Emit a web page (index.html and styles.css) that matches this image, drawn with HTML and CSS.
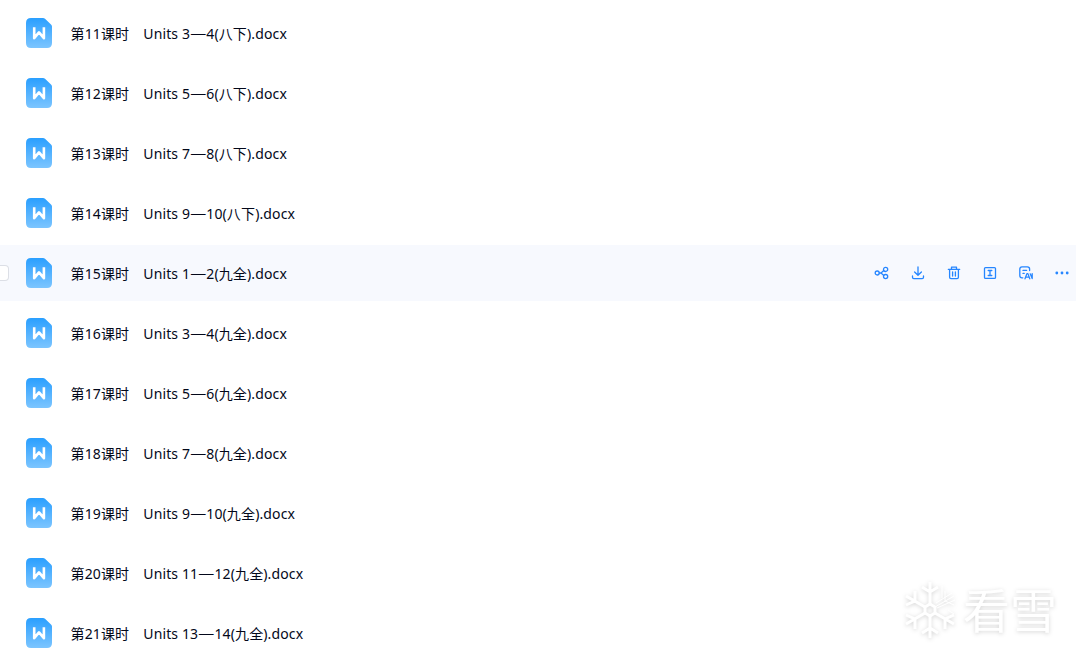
FILE: index.html
```html
<!DOCTYPE html>
<html lang="zh-CN">
<head>
    <meta charset="UTF-8">
    <meta name="viewport" content="width=device-width, initial-scale=1.0">
    <title>文件列表</title>
    <link rel="stylesheet" href="styles.css">
</head>
<body>
    <svg class="sprite" width="0" height="0">
        <defs>
            <linearGradient id="docBlue" x1="0" y1="0" x2="0" y2="1">
                <stop offset="0" stop-color="#2a9fff"/>
                <stop offset="1" stop-color="#7cc5ff"/>
            </linearGradient>
            <symbol id="doc" viewBox="0 0 26 30">
                <path d="M5 0H17Q18.1 0 19 .8L25 6.4Q26 7.3 26 8.5V25Q26 30 21 30H5Q0 30 0 25V5Q0 0 5 0Z" fill="url(#docBlue)"/>
                <path d="M8.2 9.2V20.2L13 14.4L17.9 20.2V9.2" fill="none" stroke="#fff" stroke-width="2.6" stroke-linejoin="round"/>
            </symbol>
        </defs>
    </svg>

    <ul class="file-list">
        <li class="file-row"><svg class="file-icon"><use href="#doc"/></svg><span class="file-name">第11课时　Units 3<i>—</i>4(八下).docx</span></li>
        <li class="file-row"><svg class="file-icon"><use href="#doc"/></svg><span class="file-name">第12课时　Units 5<i>—</i>6(八下).docx</span></li>
        <li class="file-row"><svg class="file-icon"><use href="#doc"/></svg><span class="file-name">第13课时　Units 7<i>—</i>8(八下).docx</span></li>
        <li class="file-row"><svg class="file-icon"><use href="#doc"/></svg><span class="file-name">第14课时　Units 9<i>—</i>10(八下).docx</span></li>
        <li class="file-row active">
            <span class="checkbox"></span>
            <svg class="file-icon"><use href="#doc"/></svg>
            <span class="file-name">第15课时　Units 1<i>—</i>2(九全).docx</span>
            <div class="actions">
                <!-- 分享 -->
                <svg viewBox="0 0 16 16"><circle cx="3.2" cy="8" r="2"/><circle cx="11.6" cy="4.4" r="2.1"/><circle cx="11.6" cy="11.6" r="2.1"/><path d="M5.3 8H7L9.8 5.6M7 8L9.8 10.4"/></svg>
                <!-- 下载 -->
                <svg viewBox="0 0 16 16"><path d="M8 2V10M4.6 7L8 10.3L11.4 7M2.5 11V12.3Q2.5 13.6 3.8 13.6H12.2Q13.5 13.6 13.5 12.3V11"/></svg>
                <!-- 删除 -->
                <svg viewBox="0 0 16 16"><path d="M2.3 4.3H13.7M5.5 4V2.2H10.5V4M3.6 4.5V12.3Q3.6 13.7 5 13.7H11Q12.4 13.7 12.4 12.3V4.5M6.6 7V11M9.4 7V11"/></svg>
                <!-- 重命名 -->
                <svg viewBox="0 0 16 16"><rect x="2.5" y="2.6" width="11" height="10.8" rx="1"/><path d="M6.2 5.5H9.8M8 5.5V10.5M6.2 10.5H9.8"/></svg>
                <!-- AI -->
                <svg viewBox="0 0 16 16"><path d="M4.8 12.8H4Q1.8 12.8 1.8 10.6V4.1Q1.8 1.9 4 1.9H9.4Q11.6 1.9 11.6 4.1V5.6M5 5.4H8.6M5 8.4H6.2"/><path d="M7 13.8L8.9 8.6H9.9L11.8 13.8M8 12.1H11.2M12.2 8.8L14.2 13.6V8.6"/></svg>
                <!-- 更多 -->
                <svg class="more" viewBox="0 0 16 16"><circle cx="2.8" cy="8" r="1.4"/><circle cx="8" cy="8" r="1.4"/><circle cx="13.2" cy="8" r="1.4"/></svg>
            </div>
        </li>
        <li class="file-row"><svg class="file-icon"><use href="#doc"/></svg><span class="file-name">第16课时　Units 3<i>—</i>4(九全).docx</span></li>
        <li class="file-row"><svg class="file-icon"><use href="#doc"/></svg><span class="file-name">第17课时　Units 5<i>—</i>6(九全).docx</span></li>
        <li class="file-row"><svg class="file-icon"><use href="#doc"/></svg><span class="file-name">第18课时　Units 7<i>—</i>8(九全).docx</span></li>
        <li class="file-row"><svg class="file-icon"><use href="#doc"/></svg><span class="file-name">第19课时　Units 9<i>—</i>10(九全).docx</span></li>
        <li class="file-row"><svg class="file-icon"><use href="#doc"/></svg><span class="file-name">第20课时　Units 11<i>—</i>12(九全).docx</span></li>
        <li class="file-row"><svg class="file-icon"><use href="#doc"/></svg><span class="file-name">第21课时　Units 13<i>—</i>14(九全).docx</span></li>
    </ul>

    <div class="watermark">
        <svg class="snowflake" viewBox="0 0 54 60">
            <path d="M27 24L32 27V33L27 36L22 33V27Z"/>
            <path d="M27 24V2M19 7L27 12L35 7M27 36V58M19 53L27 48L35 53"/>
            <path d="M22 27L3 16M3 25L12 21V11M22 33L3 44M3 35L12 39V49"/>
            <path d="M32 33L51 44M51 35L42 39V49"/>
            <path class="thin" d="M32 27L51 16M33 23L49 13M34 28L52 20M51 25L42 21V11M39 6V18M45 30L51 34"/>
        </svg>
        <span>看雪</span>
    </div>
</body>
</html>
```
FILE: styles.css
```css
* {
    box-sizing: border-box;
}
body {
    margin: 0;
    height: 663px;
    overflow: hidden;
    position: relative;
    background-color: #fff;
    color: #03081a;
    font-family: "Noto Sans", "Noto Sans CJK SC", sans-serif;
    font-size: 14px;
}
.sprite {
    position: absolute;
}
.file-list {
    list-style: none;
    margin: 0;
    padding: 5px 0 0;
    display: flex;
    flex-direction: column;
    gap: 4px;
}
.file-row {
    display: flex;
    align-items: center;
    height: 56px;
    padding: 0 6px 0 26px;
    flex-shrink: 0;
}
.file-row.active {
    background-color: #f7f9fe;
    padding-left: 0;
}
.checkbox {
    width: 9px;
    height: 16px;
    margin-right: 17px;
    background-color: #fff;
    border: 1px solid #dcdfe6;
    border-left: none;
    border-radius: 0 4px 4px 0;
}
.file-icon {
    width: 26px;
    height: 30px;
    margin-right: 18.5px;
}
.file-name {
    line-height: 20px;
    padding-top: 2px;
    white-space: nowrap;
    letter-spacing: 0.13px;
}
.file-name i {
    font-style: normal;
    font-size: 16px;
    font-weight: 300;
    line-height: 1;
}
.actions {
    display: flex;
    gap: 20px;
    margin-left: auto;
}
.actions svg {
    width: 16px;
    height: 16px;
    fill: none;
    stroke: #2686ff;
    stroke-width: 1.3;
    stroke-linecap: round;
    stroke-linejoin: round;
}
.actions .more {
    fill: #2686ff;
    stroke: none;
}

/* 水印 */
.watermark {
    position: absolute;
    left: 903px;
    top: 580px;
    display: flex;
    align-items: center;
    height: 60px;
    color: #fff;
    filter: drop-shadow(0 1px 2px rgba(0, 0, 0, 0.17));
}
.watermark span {
    margin: -4px 0 0 6px;
    font-family: "Noto Sans CJK SC", sans-serif;
    font-size: 47px;
    line-height: 60px;
}
.snowflake {
    width: 54px;
    height: 60px;
    fill: none;
    stroke: #fff;
    stroke-width: 3;
}
.snowflake .thin {
    stroke-width: 1;
}
```
